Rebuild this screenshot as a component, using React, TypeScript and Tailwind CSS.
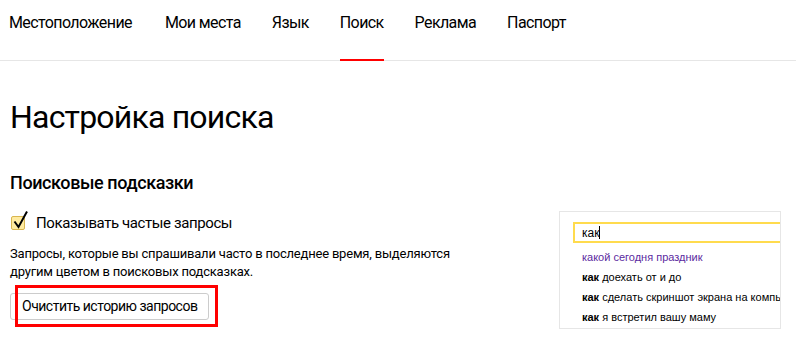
import React from 'react';

const NAV = ['Местоположение', 'Мои места', 'Язык', 'Поиск', 'Реклама', 'Паспорт'];
const ACTIVE = 'Поиск';

const SUGGESTIONS = [
  { bold: '', rest: 'какой сегодня праздник', visited: true },
  { bold: 'как', rest: ' доехать от и до', visited: false },
  { bold: 'как', rest: ' сделать скриншот экрана на компьютере', visited: false },
  { bold: 'как', rest: ' я встретил вашу маму', visited: false },
];

function SuggestPreview() {
  return (
    <div className="w-[222px] h-[118px] -mt-[2px] mr-[15px] border border-[#e6e6e6] overflow-hidden pl-[13px] pt-[10px] font-['Liberation_Sans',Arial,sans-serif]">
      <div className="w-[260px] h-[21px] border-2 border-[#ffdb4d] flex items-center pl-[7px] text-[12px] text-black">
        как<span className="inline-block w-px h-[13px] bg-black" />
      </div>
      <ul className="mt-[4px] pl-[9px] text-[11px] leading-[20px] whitespace-nowrap">
        {SUGGESTIONS.map((s, i) => (
          <li key={i} className={s.visited ? 'text-[#5b2aa0]' : 'text-black'}>
            {s.bold && <b>{s.bold}</b>}
            {s.rest}
          </li>
        ))}
      </ul>
    </div>
  );
}

export default function App() {
  return (
    <div className="w-[796px] h-[350px] bg-white text-black overflow-hidden font-['Roboto',sans-serif]">
      {/* Tabs */}
      <nav className="h-[61px] border-b border-[#e6e6e6] pl-[9px] flex gap-[31px]">
        {NAV.map((item, i) => (
          <div
            key={item}
            className={`relative h-[60px] pt-[12px] text-[16px] leading-[22px] tracking-[-0.6px] ${i === 0 ? 'pr-[2px]' : ''}`}
          >
            {item}
            {item === ACTIVE && (
              <span className="absolute left-0 right-0 bottom-[-1px] h-[2px] bg-[#ff0000]" />
            )}
          </div>
        ))}
      </nav>

      <main className="pl-[10px]">
        <h1 className="mt-[39px] text-[32px] leading-[34px] font-normal tracking-[-0.8px]">Настройка поиска</h1>

        <h2 className="mt-[37px] text-[18px] leading-[24px] font-medium tracking-[-0.4px]">Поисковые подсказки</h2>

        <div className="mt-[18px] flex justify-between">
          <div>
            <label className="flex items-center h-[20px] text-[15px] leading-[20px] tracking-[-0.4px]">
              <span className="relative ml-px w-[14px] h-[14px] rounded-[2px] bg-[#ffeba0] border border-[#d9b650]">
                <svg className="absolute left-[1px] top-[-7px]" width="16" height="20" viewBox="0 0 16 20">
                  <path d="M1.5 11.5 L5.5 17 L14 1.5" fill="none" stroke="#000" strokeWidth="2" />
                </svg>
              </span>
              <span className="ml-[11px]">Показывать частые запросы</span>
            </label>

            <p className="mt-[12px] text-[13px] leading-[18px] tracking-[-0.2px]">
              Запросы, которые вы спрашивали часто в последнее время, выделяются
              <br />
              другим цветом в поисковых подсказках.
            </p>

            <div className="relative mt-[12px] w-[199px]">
              <button className="w-[199px] h-[27px] border border-[#cccccc] rounded-[3px] bg-white text-left pl-[11px] text-[14px] leading-[25px] tracking-[-0.5px] whitespace-nowrap">
                Очистить историю запросов
              </button>
              <span className="absolute left-[5px] top-[-8px] w-[203px] h-[42px] border-[3px] border-[#ff0000] pointer-events-none" />
            </div>
          </div>

          <SuggestPreview />
        </div>
      </main>
    </div>
  );
}
